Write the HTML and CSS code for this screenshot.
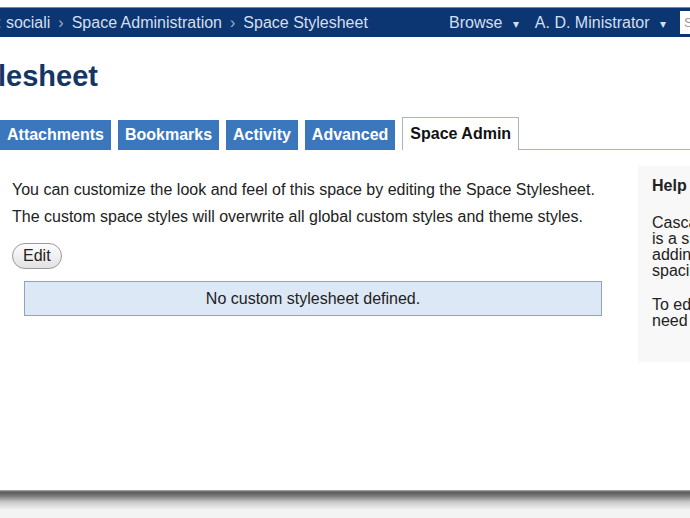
FILE: index.html
```html
<!DOCTYPE html>
<html lang="en">
<head>
    <meta charset="UTF-8">
    <title>Space Stylesheet</title>
    <link rel="stylesheet" href="styles.css">
</head>
<body>
    <div class="window">
        <div class="topbar">
            <div class="crumbs">
                <span>: sociali</span>
                <span class="sep">&rsaquo;</span>
                <span>Space Administration</span>
                <span class="sep">&rsaquo;</span>
                <span>Space Stylesheet</span>
            </div>
            <div class="menus">
                <span class="menu">Browse <span class="caret">&#9662;</span></span>
                <span class="menu">A. D. Ministrator <span class="caret">&#9662;</span></span>
            </div>
            <div class="search">Search</div>
        </div>
        <h1 class="title">lesheet</h1>
        <div class="tabs">
            <span class="tab first">Attachments</span>
            <span class="tab">Bookmarks</span>
            <span class="tab">Activity</span>
            <span class="tab">Advanced</span>
            <span class="tab active">Space Admin</span>
            <span class="tab-rest"></span>
        </div>
        <div class="main">
            <div class="content">
                <p class="intro">You can customize the look and feel of this space by editing the Space Stylesheet.<br>
                The custom space styles will overwrite all global custom styles and theme styles.</p>
                <button class="edit">Edit</button>
                <div class="notice">No custom stylesheet defined.</div>
            </div>
            <div class="help">
                <h3>Help</h3>
                <p>Cascading Style Sheets (CSS)<br>is a simple mechanism for<br>adding style (e.g. fonts, colors,<br>spacing) to Web documents.</p>
                <p>To edit the stylesheet you<br>need space admin permission.</p>
            </div>
        </div>
    </div>
    <div class="shadow"></div>
</body>
</html>
```

FILE: styles.css
```css
body {
    margin: 0;
    background: #f3f3f3;
    font-family: "Liberation Sans", Arial, sans-serif;
    overflow: hidden;
}
.window {
    width: 690px;
    height: 490px;
    background: #fff;
    overflow: hidden;
}
.shadow {
    height: 20px;
    background: linear-gradient(#b5b5b5, #5a5a5a 2px, #7a7a7a 6px, #c9c9c9 12px, #f3f3f3 20px);
}
.topbar {
    margin-top: 7px;
    height: 29px;
    display: flex;
    align-items: center;
    background: #0c3671;
    color: #d3dff0;
    font-size: 16px;
    border-top: 1px solid #6c86ad;
}
.crumbs {
    flex: 1;
    display: flex;
    gap: 8px;
    margin-left: -3px;
}
.sep {
    color: #9fb2d0;
}
.menus {
    display: flex;
    gap: 16px;
    margin-right: 14px;
}
.caret {
    font-size: 12px;
    margin-left: 6px;
}
.search {
    width: 120px;
    align-self: stretch;
    margin: 3px -110px 3px 0;
    background: #fff;
    color: #999;
    font-size: 13px;
    padding: 4px 4px 0;
    box-sizing: border-box;
}
.title {
    margin: 23px 0 0 -2px;
    height: 36px;
    font-size: 29px;
    color: #143565;
}
.tabs {
    display: flex;
    align-items: flex-end;
    margin-top: 22px;
    height: 32px;
}
.tab {
    background: #3b77bc;
    color: #fff;
    font-size: 16px;
    font-weight: bold;
    padding: 0 7px;
    height: 30px;
    line-height: 29px;
    margin-right: 7px;
    flex: none;
}
.tab.first {
    margin-left: -2px;
    padding-left: 9px;
}
.tab.active {
    background: #fff;
    color: #111;
    border: 1px solid #a9b4c2;
    border-bottom: none;
    height: 32px;
    line-height: 32px;
    margin-right: 0;
}
.tab-rest {
    flex: 1;
    border-bottom: 1px solid #a9b4c2;
}
.main {
    display: flex;
}
.content {
    width: 610px;
    flex: none;
    padding: 26px 0 0 12px;
}
.intro {
    margin: 0;
    font-size: 16px;
    line-height: 27px;
    color: #222;
}
.edit {
    margin-top: 13px;
    font-family: "Liberation Sans", Arial, sans-serif;
    font-size: 16px;
    color: #222;
    padding: 0 10px;
    height: 26px;
    border: 1px solid #999;
    border-radius: 13px;
    background: linear-gradient(#fdfdfd, #e2e2e2);
}
.notice {
    margin: 12px 0 0 12px;
    width: 576px;
    height: 33px;
    line-height: 33px;
    text-align: center;
    font-size: 16px;
    color: #222;
    background: #dde8f6;
    border: 1px solid #8fa4bf;
}
.help {
    flex: none;
    width: 220px;
    margin: 16px 0 0 16px;
    padding: 8px 14px 20px;
    height: 168px;
    background: #f8f8f8;
    color: #222;
    font-size: 16px;
}
.help h3 {
    margin: 3px 0 20px;
    font-size: 16px;
}
.help p {
    margin: 0 0 18px;
    line-height: 16px;
}
```
